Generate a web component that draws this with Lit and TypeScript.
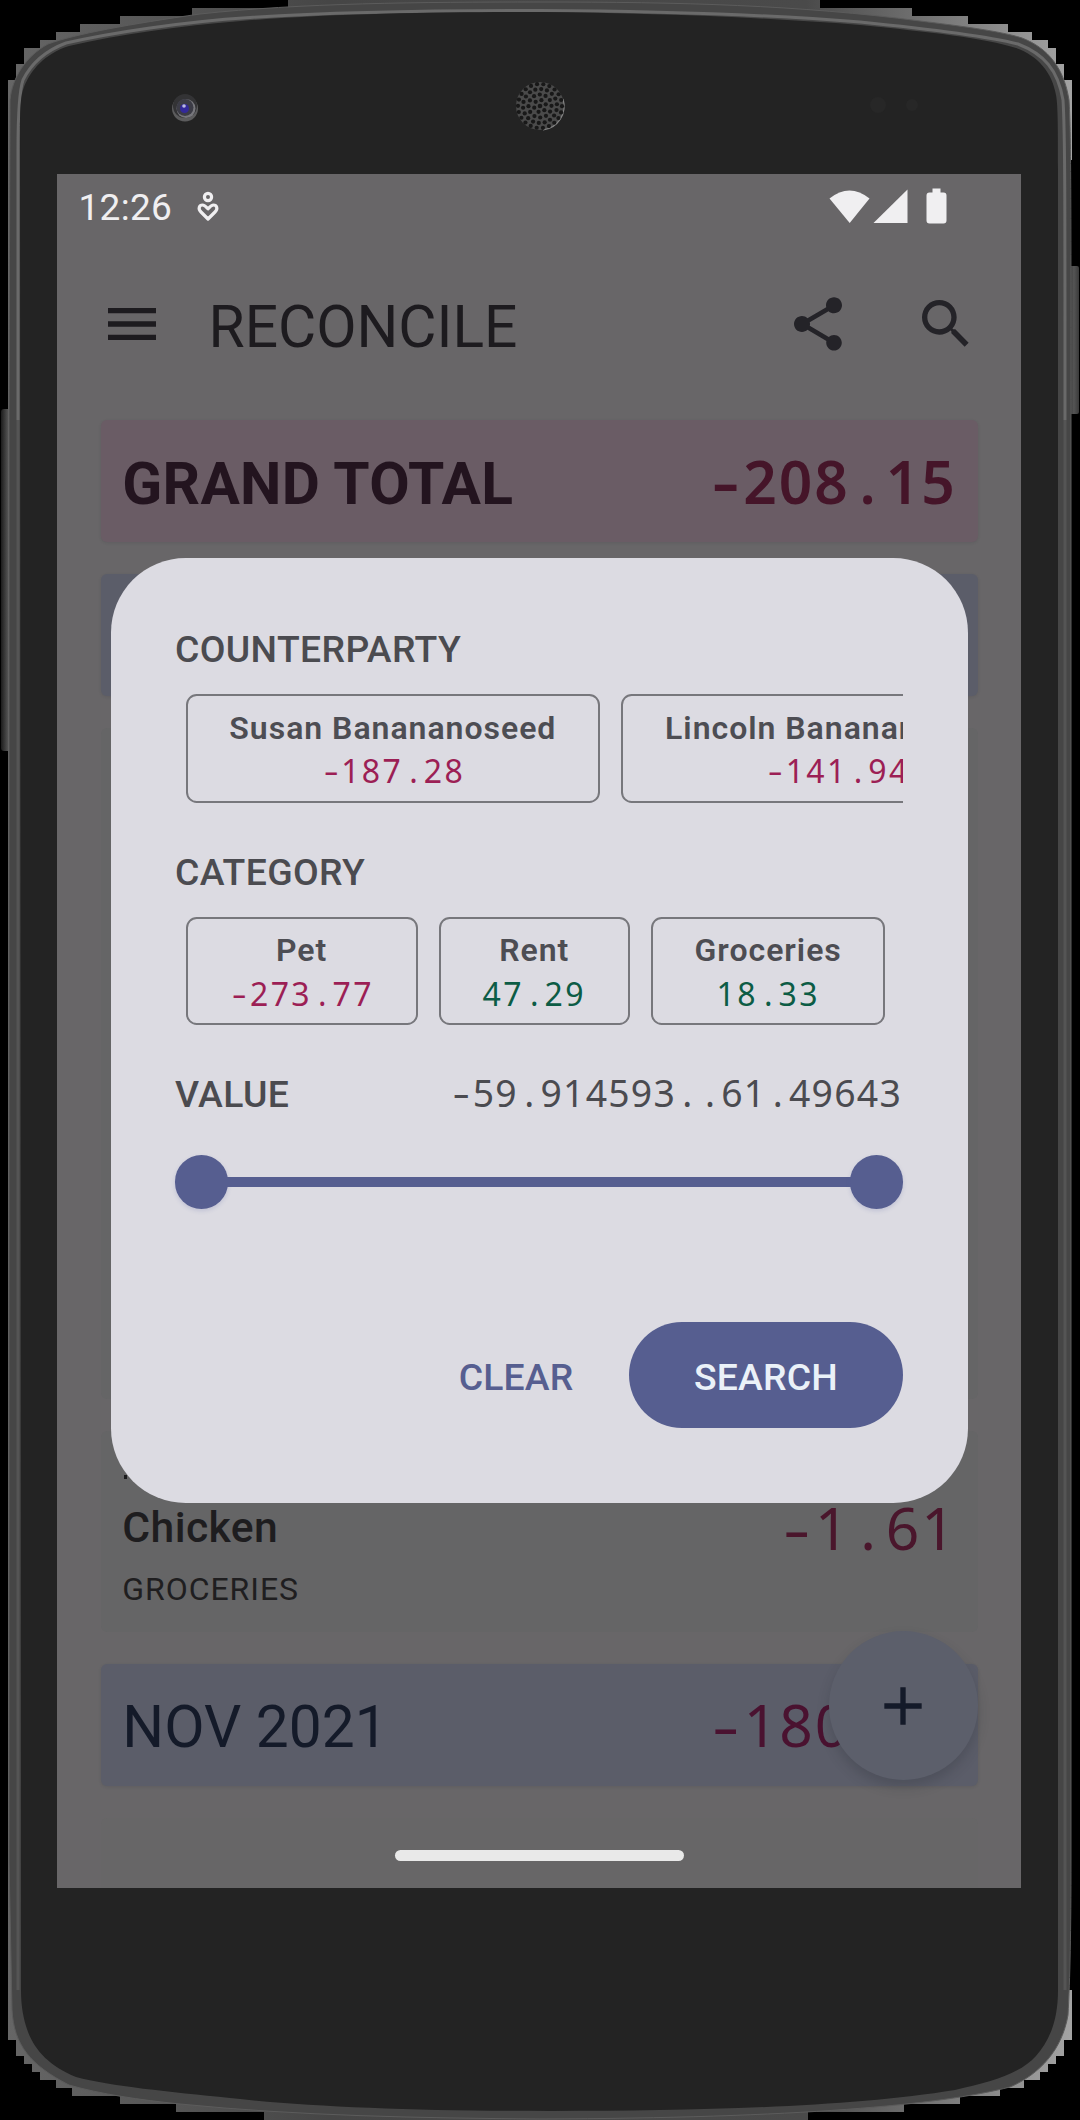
import { LitElement, html, svg, css } from "lit";
import { customElement, property } from "lit/decorators.js";

@customElement("mono-amount")
export class MonoAmount extends LitElement {
  @property() value = "";

  static styles = css`
    :host {
      display: inline-block;
      white-space: nowrap;
      font-family: "Noto Sans", "Open Sans", sans-serif;
    }
    .digits {
      letter-spacing: calc(0.028em + var(--track, 0px));
    }
    .dot {
      padding: 0 calc(0.166em + var(--track, 0px) / 2);
    }
    .minus {
      display: inline-block;
      width: calc(0.6em + var(--track, 0px));
      text-align: center;
      transform: scaleX(1.45);
    }
  `;

  render() {
    const parts = this.value.match(/\d+|\.|-/g) ?? [];
    return parts.map((p) =>
      p === "-"
        ? html`<span class="minus">-</span>`
        : p === "."
          ? html`<span class="dot">.</span>`
          : html`<span class="digits">${p}</span>`
    );
  }
}

interface Chip {
  name: string;
  value: string;
}

@customElement("chip-row")
export class ChipRow extends LitElement {
  @property({ attribute: false }) chips: Chip[] = [];

  static styles = css`
    :host {
      display: flex;
      gap: 21.33px;
      padding-left: 10.67px;
      overflow: hidden;
    }
    .chip {
      box-sizing: border-box;
      flex: none;
      height: 108.5px;
      padding: 13.5px 41.7px 0;
      border: 2.67px solid #77777c;
      border-radius: 10.67px;
      display: flex;
      flex-direction: column;
      align-items: center;
    }
    .name {
      font: 650 32px/37px Roboto, sans-serif;
      letter-spacing: 0.98px;
      color: #4d4d53;
      white-space: nowrap;
    }
    .amount {
      --track: 1.45px;
      font-size: 32px;
      line-height: 37px;
      margin-top: 5.5px;
    }
    .neg {
      color: #9c1f55;
    }
    .pos {
      color: #0c5c45;
    }
  `;

  render() {
    return this.chips.map(
      (c) => html`<div class="chip">
        <div class="name">${c.name}</div>
        <mono-amount class="amount ${c.value.startsWith("-") ? "neg" : "pos"}" value=${c.value}></mono-amount>
      </div>`
    );
  }
}

@customElement("search-dialog")
export class SearchDialog extends LitElement {
  static styles = css`
    :host {
      box-sizing: border-box;
      display: flex;
      flex-direction: column;
      padding: 69px 65px 0 64px;
      border-radius: 74.67px;
      background: #dcdbe2;
      font-family: Roboto, sans-serif;
      color: #4b4b50;
    }
    .label {
      font-size: 37.33px;
      line-height: 44px;
      font-weight: 500;
      letter-spacing: 0.37px;
    }
    chip-row {
      margin: 23px 0 47.2px;
    }
    .valueline {
      display: flex;
      justify-content: space-between;
      align-items: baseline;
      height: 45.5px;
      margin-top: -1.5px;
    }
    .range {
      --track: 0.2px;
      font-size: 37.33px;
      line-height: 44px;
      margin-right: 1px;
    }
    .slider {
      display: flex;
      align-items: center;
      margin-top: 38.5px;
      height: 54px;
    }
    .knob {
      width: 53.33px;
      height: 53.33px;
      border-radius: 50%;
      background: #565e90;
      box-shadow: 0 2px 4px rgba(86, 94, 160, 0.2);
    }
    .track {
      flex: 1;
      height: 10.67px;
      margin: 0 -4px;
      background: #565e90;
    }
    .actions {
      display: flex;
      justify-content: flex-end;
      align-items: center;
      gap: 55.5px;
      margin-top: 112.8px;
    }
    .clear,
    .search {
      font-size: 37.33px;
      font-weight: 500;
      letter-spacing: 0.2px;
    }
    .clear {
      padding-top: 3px;
      color: #565e90;
    }
    .search {
      width: 274px;
      height: 106.67px;
      line-height: 110px;
      text-align: center;
      border-radius: 54px;
      background: #565e90;
      color: #eaf1f8;
    }
  `;

  render() {
    return html`
      <div class="label">COUNTERPARTY</div>
      <chip-row
        .chips=${[
          { name: "Susan Banananoseed", value: "-187.28" },
          { name: "Lincoln Banananoseed", value: "-141.94" },
        ]}
      ></chip-row>
      <div class="label">CATEGORY</div>
      <chip-row
        .chips=${[
          { name: "Pet", value: "-273.77" },
          { name: "Rent", value: "47.29" },
          { name: "Groceries", value: "18.33" },
        ]}
      ></chip-row>
      <div class="valueline">
        <span class="label">VALUE</span>
        <mono-amount class="range" value="-59.914593..61.49643"></mono-amount>
      </div>
      <div class="slider">
        <div class="knob"></div>
        <div class="track"></div>
        <div class="knob"></div>
      </div>
      <div class="actions">
        <span class="clear">CLEAR</span>
        <span class="search">SEARCH</span>
      </div>
    `;
  }
}

@customElement("device-frame")
export class DeviceFrame extends LitElement {
  static styles = css`
    :host {
      display: block;
    }
    svg {
      display: block;
    }
  `;

  private grille() {
    const dots = [svg`<circle cx="540" cy="106" r="2.3" />`];
    [
      [6, 6],
      [12, 11.5],
      [18, 17],
      [22, 22],
    ].forEach(([n, r]) => {
      for (let i = 0; i < n; i++) {
        const a = (i / n) * Math.PI * 2 + r;
        dots.push(svg`<circle cx=${540 + Math.cos(a) * r} cy=${106 + Math.sin(a) * r} r="2.1" />`);
      }
    });
    return dots;
  }

  render() {
    return html`<svg width="1080" height="2120" viewBox="0 0 1080 2120">
      <defs>
        <linearGradient id="key" x1="0" x2="1">
          <stop offset="0" stop-color="#1c1c1c" />
          <stop offset="0.6" stop-color="#555" />
          <stop offset="1" stop-color="#3a3a3a" />
        </linearGradient>
        <linearGradient id="corner" x1="0" x2="1">
          <stop offset="0" stop-color="#666" />
          <stop offset="0.3" stop-color="#464646" />
          <stop offset="0.75" stop-color="#4a4a4a" />
          <stop offset="1" stop-color="#a4a4a4" />
        </linearGradient>
      </defs>
      <rect width="1080" height="2120" fill="#000" />
      <rect x="1" y="409" width="12" height="342" rx="3" fill="url(#key)" />
      <rect x="1066" y="266" width="13" height="148" rx="2" fill="url(#key)" />
      <path
        fill="url(#corner)"
        d="M8 80H16V64H24V48H40V40H56V32H80V24H120V16H192V8H288V0H820V8H912V16H968V24H1008V32H1032V40H1048V48H1056V64H1064V80H1072V160H1066V1990H1072V2040H1064V2056H1056V2064H1048V2072H1040V2080H1024V2088H1000V2096H960V2104H904V2112H808V2120H264V2112H176V2104H120V2096H72V2088H56V2080H40V2072H32V2064H24V2056H16V2040H8Z"
      />
      <path
        fill="#464646"
        stroke="#5c5c5c"
        stroke-width="1"
        d="M10 100C12 78 26 56 48 44C75 34 130 24 200 14C300 3 420 2 540 2C680 2 800 5 920 21C960 26 1000 31 1022 38C1048 48 1064 68 1069 100C1071 130 1071 200 1071 420V1860C1071 1930 1070 1980 1068 2015C1062 2050 1040 2074 1010 2087C940 2105 800 2118 540 2119C420 2118 300 2116 180 2104C140 2100 100 2094 69 2085C30 2065 14 2045 12 2010L9 1860V420Z"
      />
      <path
        fill="none"
        stroke="#6a6a6a"
        stroke-width="3"
        d="M18 420V150C18 112 19 92 23 80C30 66 42 52 66 43C110 33 180 22 250 17.500C350 11 450 10.500 540 10.500C650 11 760 14 860 22C940 30 990 37 1018 44C1044 54 1058 70 1063 100C1065 130 1065 200 1065 420"
      />
      <path fill="none" stroke="#555" stroke-width="3" d="M18 420V1990M1065 420V1990" />
      <path
        fill="#232323"
        d="M20 130C20 105 21 95 24 87C31 70 44 54 69 46C120 34 180 26 241 21C340 13 450 12 540 12C650 13 760 17 860 25C930 32 985 38 1016 48C1038 56 1052 72 1056 95C1058 105 1058 130 1058 170V1990C1058 2020 1050 2040 1036 2056C1020 2074 990 2082 955 2090C850 2107 700 2111 551 2111C420 2111 310 2107 230 2098C170 2092 110 2086 76 2077C50 2066 36 2052 28 2032C23 2018 21 2005 21 1990Z"
      />
      <circle cx="185" cy="108.500" r="13" fill="#5c5c5d" />
      <circle cx="185" cy="106" r="12" fill="#333335" />
      <circle cx="186" cy="108.500" r="9.500" fill="#77777c" />
      <circle cx="185" cy="107.500" r="8.500" fill="#3c3c46" />
      <circle cx="184.500" cy="108.500" r="4.500" fill="#33299a" />
      <circle cx="184" cy="106" r="1.800" fill="#b9b9e0" />
      <circle cx="540" cy="106" r="24" fill="#4a4a4a" />
      <path d="M563 99A24 24 0 0 1 543 130" fill="none" stroke="#858585" stroke-width="1.200" />
      <g fill="#181818">${this.grille()}</g>
      <circle cx="878" cy="105" r="8" fill="#272727" />
      <circle cx="912" cy="105" r="6" fill="#272727" />
    </svg>`;
  }
}

@customElement("app-root")
export class AppRoot extends LitElement {
  static styles = css`
    :host {
      display: block;
      position: relative;
      width: 1080px;
      height: 2120px;
      overflow: hidden;
      background: #000;
      font-family: Roboto, sans-serif;
    }
    .frame {
      position: absolute;
      inset: 0;
    }
    .screen {
      position: absolute;
      left: 57px;
      top: 174px;
      width: 964px;
      height: 1714px;
      overflow: hidden;
      background: #686668;
      display: flex;
      flex-direction: column;
    }
    .status {
      flex: none;
      height: 64px;
      display: flex;
      align-items: center;
      padding: 0 74px 0 21.5px;
      color: #f0eff1;
      fill: #f0eff1;
    }
    .time {
      font-size: 37px;
      line-height: 66px;
      margin-top: 4px;
      letter-spacing: 0.3px;
    }
    .wellbeing {
      margin-left: 22.5px;
    }
    .system {
      margin-left: auto;
    }
    .appbar {
      flex: none;
      height: 171px;
      display: flex;
      align-items: center;
      padding: 0 43px;
    }
    .title {
      flex: 1;
      margin-left: 44.5px;
      font-size: 58.67px;
      line-height: 70px;
      padding-top: 7px;
      color: #1d1b1f;
    }
    .tools {
      display: flex;
      gap: 64px;
    }
    .list {
      flex: none;
      display: flex;
      flex-direction: column;
      gap: 32px;
      padding: 11px 43px 0 44px;
    }
    .row {
      box-sizing: border-box;
      height: 122px;
      padding: 16px 21.33px 0;
      display: flex;
      justify-content: space-between;
      align-items: baseline;
      border-radius: 6px;
      font-size: 58.67px;
      line-height: 90px;
      box-shadow: 0 1px 3px rgba(50, 50, 55, 0.15);
    }
    .grand {
      background: #6a5c65;
      color: #23141f;
      font-weight: 700;
      letter-spacing: 0.25px;
    }
    .amount {
      --track: 0.25px;
    }
    .grand .amount {
      font-weight: 560;
      color: #451529;
    }
    .month {
      background: #5b5d69;
      color: #141a29;
      line-height: 88.5px;
    }
    .month .amount {
      color: #4a1230;
      margin-right: 106.5px;
    }
    .card {
      box-sizing: border-box;
      background: #656566;
      border-radius: 6px;
    }
    .tall {
      height: 671px;
    }
    .entry {
      height: 200.5px;
      padding: 44px 21.33px 0;
      display: flex;
      flex-direction: column;
    }
    .tick {
      flex: none;
      width: 3px;
      height: 4px;
      margin-left: 2px;
      background: #1c1c1e;
    }
    .line {
      flex: none;
      display: flex;
      justify-content: space-between;
      align-items: baseline;
      height: 80px;
    }
    .name {
      font-size: 42.67px;
      font-weight: 500;
      letter-spacing: 0.4px;
      line-height: 80px;
      color: #1e1d1f;
    }
    .line .amount {
      font-size: 58.67px;
      line-height: 80px;
      color: #4a162c;
      position: relative;
      top: 7.5px;
    }
    .category {
      font-size: 32px;
      line-height: 38px;
      letter-spacing: 0.95px;
      margin-top: 10.5px;
      color: #1f1e20;
    }
    .next {
      height: 110px;
      background: #676667;
    }
    .fab {
      position: absolute;
      left: 771.500px;
      top: 1457px;
      width: 149.33px;
      height: 149.33px;
      border-radius: 50%;
      background: #5c5f6b;
      box-shadow: 0 7px 12px rgba(40, 42, 50, 0.25);
      display: grid;
      place-items: center;
    }
    search-dialog {
      position: absolute;
      left: 54px;
      top: 384px;
      width: 857px;
      height: 945px;
    }
    .home {
      position: absolute;
      left: 338px;
      top: 1676px;
      width: 289px;
      height: 10.67px;
      border-radius: 6px;
      background: #e9e9e9;
    }
  `;

  render() {
    return html`
      <device-frame class="frame"></device-frame>
      <div class="screen">
        <div class="status">
          <span class="time">12:26</span>
          <svg class="wellbeing" width="26" height="32" viewBox="0 0 26 32" fill="none" stroke="#f0eff1" stroke-width="3.200">
            <circle cx="13" cy="7" r="3.600" />
            <path stroke-linejoin="round" d="M13 29L6 22C2.500 18.500 4.500 15 7.500 15C9.800 15 11.200 16.800 13 18.800C14.800 16.800 16.200 15 18.500 15C21.500 15 23.500 18.500 20 22Z" />
          </svg>
          <svg class="system" width="120" height="40" viewBox="0 0 120 40">
            <path d="M2.500 12.500Q22.500-3.500 42.500 12.500L22.700 37Z" />
            <path d="M80.500 3.500V37H46.500Z" />
            <path d="M105.500 2.500H113.500V6.500H116.500Q119.500 6.500 119.500 9.500V34.500Q119.500 37.500 116.500 37.500H102.500Q99.500 37.500 99.500 34.500V9.500Q99.500 6.500 102.500 6.500H105.500Z" />
          </svg>
        </div>
        <div class="appbar">
          <svg width="64" height="64" viewBox="0 0 24 24" fill="#1d1b1f">
            <path d="M3 18h18v-2H3v2zm0-5h18v-2H3v2zm0-7v2h18V6H3z" />
          </svg>
          <span class="title">RECONCILE</span>
          <div class="tools">
            <svg width="64" height="64" viewBox="0 0 24 24" fill="#242328">
              <path d="M18 16.080c-.76 0-1.440.3-1.960.77L8.910 12.700c.05-.23.09-.46.09-.7s-.04-.47-.09-.7l7.050-4.110c.54.5 1.250.81 2.040.81 1.660 0 3-1.340 3-3s-1.340-3-3-3-3 1.340-3 3c0 .24.04.47.09.7L8.040 9.810C7.500 9.310 6.790 9 6 9c-1.660 0-3 1.340-3 3s1.340 3 3 3c.79 0 1.500-.31 2.040-.81l7.120 4.160c-.05.21-.08.43-.08.65 0 1.610 1.310 2.920 2.920 2.920s2.920-1.310 2.920-2.920-1.310-2.920-2.920-2.920z" />
            </svg>
            <svg width="64" height="64" viewBox="0 0 24 24" fill="#242328">
              <path d="M15.500 14h-.79l-.28-.27A6.471 6.471 0 0 0 16 9.500 6.500 6.500 0 1 0 9.500 16c1.610 0 3.090-.59 4.230-1.570l.27.28v.79l5 4.990L20.490 19l-4.990-5zm-6 0C7.010 14 5 11.990 5 9.500S7.010 5 9.500 5 14 7.010 14 9.500 11.990 14 9.500 14z" />
            </svg>
          </div>
        </div>
        <div class="list">
          <div class="row grand">
            <span>GRAND TOTAL</span>
            <mono-amount class="amount" value="-208.15"></mono-amount>
          </div>
          <div class="row month"></div>
          <div class="card tall"></div>
          <div class="card entry">
            <div class="tick"></div>
            <div class="line">
              <span class="name">Chicken</span>
              <mono-amount class="amount" value="-1.61"></mono-amount>
            </div>
            <div class="category">GROCERIES</div>
          </div>
          <div class="row month">
            <span>NOV 2021</span>
            <mono-amount class="amount" value="-180"></mono-amount>
          </div>
          <div class="card next"></div>
        </div>
        <div class="fab">
          <svg width="64" height="64" viewBox="0 0 24 24" fill="#141a29">
            <path d="M19 13h-6v6h-2v-6H5v-2h6V5h2v6h6v2z" />
          </svg>
        </div>
        <search-dialog></search-dialog>
        <div class="home"></div>
      </div>
    `;
  }
}
